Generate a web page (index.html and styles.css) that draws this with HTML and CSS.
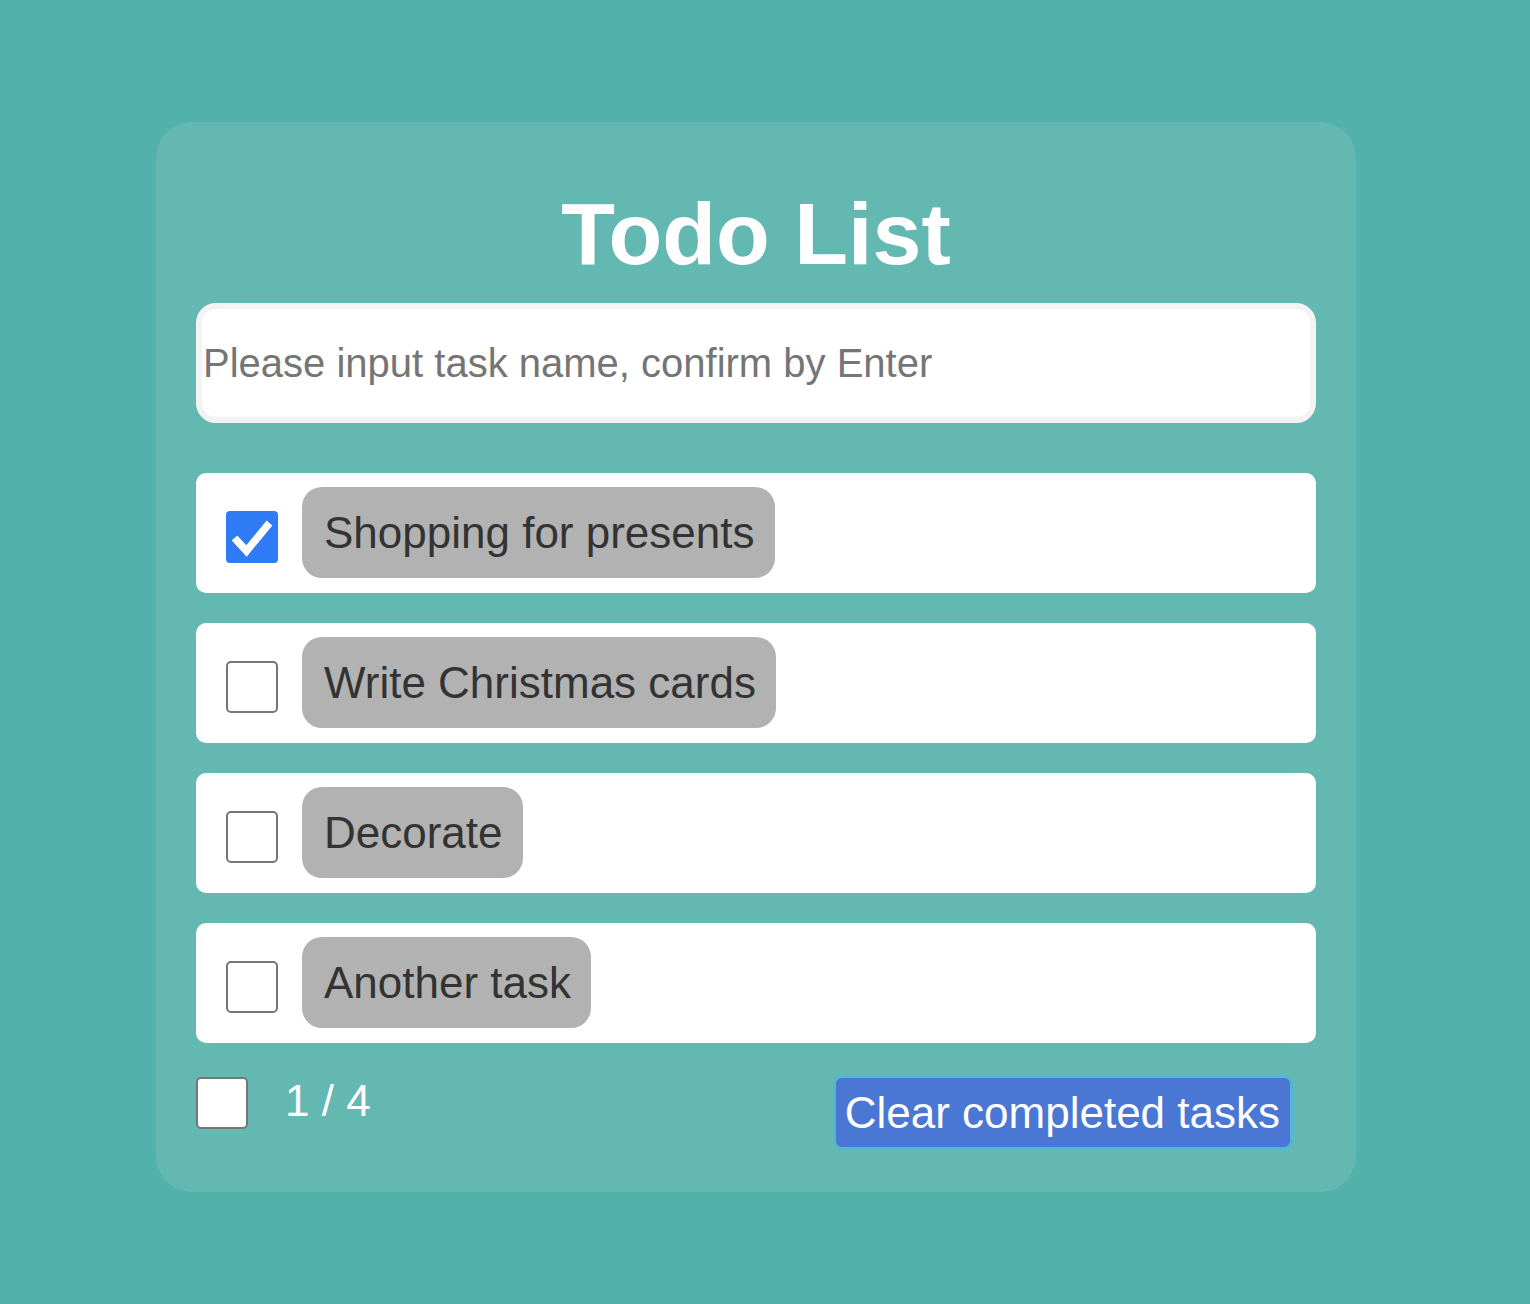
FILE: index.html
```html
<!DOCTYPE html>
<html lang="en">
<head>
<meta charset="utf-8">
<title>Todo List</title>
<link rel="stylesheet" href="styles.css">
</head>
<body>
<main class="card">
  <h1 class="title">Todo List</h1>
  <input class="task-input" type="text" placeholder="Please input task name, confirm by Enter">
  <ul class="list">
    <li class="item">
      <span class="box checked"><svg viewBox="0 0 52 52" width="52" height="52"><polyline points="8.5,27 20.5,40 43.5,12" fill="none" stroke="#fff" stroke-width="7.5"/></svg></span>
      <span class="label">Shopping for presents</span>
    </li>
    <li class="item">
      <span class="box"></span>
      <span class="label">Write Christmas cards</span>
    </li>
    <li class="item">
      <span class="box"></span>
      <span class="label">Decorate</span>
    </li>
    <li class="item">
      <span class="box"></span>
      <span class="label">Another task</span>
    </li>
  </ul>
  <footer class="footer">
    <span class="box"></span>
    <span class="count">1 / 4</span>
    <button class="clear" type="button">Clear completed tasks</button>
  </footer>
</main>
</body>
</html>
```

FILE: styles.css
```css
html, body {
  margin: 0;
  padding: 0;
}
body {
  background: #52b1ab;
  font-family: "Liberation Sans", Arial, Helvetica, sans-serif;
  min-height: 1304px;
  padding-top: 122px;
  box-sizing: border-box;
}
.card {
  width: 1200px;
  height: 1070px;
  margin-left: 156px;
  box-sizing: border-box;
  background: #64b8b2;
  border-radius: 36px;
  padding: 40px;
  display: flex;
  flex-direction: column;
}
.title {
  margin: 21px 0 18px;
  text-align: center;
  color: #fff;
  font-size: 88px;
  font-weight: bold;
  line-height: 102px;
}
.task-input {
  display: block;
  width: 100%;
  height: 120px;
  box-sizing: border-box;
  border: 6px solid #f3f3f3;
  border-radius: 20px;
  background: #fff;
  padding: 0 1px;
  font-family: inherit;
  font-size: 40px;
  color: #333;
  outline: none;
}
.task-input::placeholder {
  color: #757575;
}
.list {
  list-style: none;
  margin: 50px 0 0;
  padding: 0;
  display: flex;
  flex-direction: column;
  gap: 30px;
}
.item {
  height: 120px;
  box-sizing: border-box;
  background: #fff;
  border-radius: 10px;
  padding-left: 30px;
  display: flex;
  align-items: center;
  gap: 24px;
}
.box {
  flex: none;
  width: 52px;
  height: 52px;
  box-sizing: border-box;
  border: 2px solid #767676;
  border-radius: 5px;
  background: #fff;
}
.box.checked {
  border: none;
  background: #2f7bf6;
  border-radius: 4px;
  display: block;
}
.box svg {
  display: block;
}
.item .box {
  margin-top: 8px;
}
.label {
  background: #b2b2b2;
  color: #333;
  font-size: 44px;
  line-height: 51px;
  padding: 20px 20px 20px 22px;
  border-radius: 20px;
  margin-top: -1px;
}
.footer {
  margin-top: 32px;
  display: flex;
  align-items: flex-start;
}
.footer .box {
  margin-top: 2px;
}
.count {
  color: #fff;
  font-size: 44px;
  line-height: 51px;
  margin-left: 37px;
}
.clear {
  margin-left: auto;
  margin-right: 23px;
  background: #4a77d4;
  color: #fff;
  border: 3px solid #55b5d8;
  border-radius: 9px;
  font-family: inherit;
  font-size: 44px;
  line-height: 51px;
  padding: 9px 10px 9px 9px;
  cursor: pointer;
}
```
